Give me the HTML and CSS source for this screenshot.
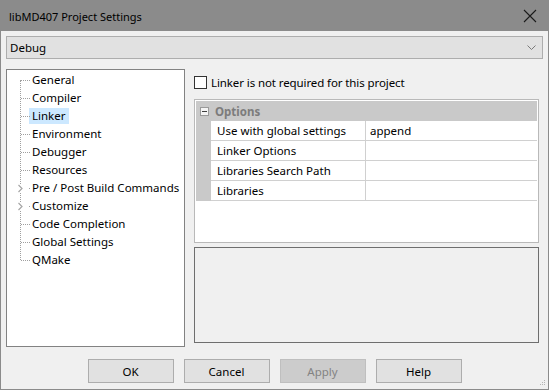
FILE: index.html
```html
<!DOCTYPE html>
<html lang="en">
<head>
    <meta charset="UTF-8">
    <title>libMD407 Project Settings</title>
    <link rel="stylesheet" href="styles.css">
</head>
<body>
    <div class="window">
        <div class="titlebar">
            <span class="title">libMD407 Project Settings</span>
            <svg class="close" width="14" height="14" viewBox="0 0 14 14">
                <path d="M1 1 L13 13 M13 1 L1 13" stroke="#1b1b1b" stroke-width="1.1" fill="none"/>
            </svg>
        </div>
        <div class="frame">
            <div class="combo">
                <span>Debug</span>
                <svg width="9" height="6" viewBox="0 0 9 6">
                    <path d="M0.5 0.5 L4.5 4.5 L8.5 0.5" stroke="#7a7a7a" fill="none"/>
                </svg>
            </div>
            <div class="main">
                <ul class="tree">
                    <li>General</li>
                    <li>Compiler</li>
                    <li><span class="selected">Linker</span></li>
                    <li>Environment</li>
                    <li>Debugger</li>
                    <li>Resources</li>
                    <li class="exp">
                        <svg class="arrow" width="7" height="9" viewBox="0 0 7 9"><path d="M1.5 1 L5 4.5 L1.5 8" stroke="#a6a6a6" stroke-width="1.2" fill="none"/></svg>
                        Pre / Post Build Commands
                    </li>
                    <li class="exp">
                        <svg class="arrow" width="7" height="9" viewBox="0 0 7 9"><path d="M1.5 1 L5 4.5 L1.5 8" stroke="#a6a6a6" stroke-width="1.2" fill="none"/></svg>
                        Customize
                    </li>
                    <li>Code Completion</li>
                    <li>Global Settings</li>
                    <li>QMake</li>
                </ul>
                <div class="side">
                    <label class="check"><span class="box"></span>Linker is not required for this project</label>
                    <div class="grid">
                        <div class="group">
                            <span class="minus"></span>
                            <b>Options</b>
                        </div>
                        <div class="row"><span class="margin"></span><span class="name">Use with global settings</span><span class="value">append</span></div>
                        <div class="row"><span class="margin"></span><span class="name">Linker Options</span><span class="value"></span></div>
                        <div class="row"><span class="margin"></span><span class="name">Libraries Search Path</span><span class="value"></span></div>
                        <div class="row"><span class="margin"></span><span class="name">Libraries</span><span class="value"></span></div>
                    </div>
                    <div class="desc"></div>
                </div>
            </div>
            <div class="buttons">
                <button class="btn">OK</button>
                <button class="btn">Cancel</button>
                <button class="btn disabled">Apply</button>
                <button class="btn">Help</button>
            </div>
            <svg class="grip" width="6" height="6" viewBox="0 0 6 6">
                <rect x="4" y="0" width="1" height="1" fill="#b5b5b5"/>
                <rect x="2" y="2" width="1" height="1" fill="#b5b5b5"/>
                <rect x="4" y="2" width="1" height="1" fill="#b5b5b5"/>
                <rect x="0" y="4" width="1" height="1" fill="#b5b5b5"/>
                <rect x="2" y="4" width="1" height="1" fill="#b5b5b5"/>
                <rect x="4" y="4" width="1" height="1" fill="#b5b5b5"/>
            </svg>
        </div>
    </div>
</body>
</html>
```

FILE: styles.css
```css
body {
    margin: 0;
    font-family: "Noto Sans", sans-serif;
    font-size: 11.5px;
    color: #000;
    background: #f0f0f0;
}
.window {
    width: 549px;
    height: 390px;
}
.titlebar {
    height: 31px;
    background: #8b8b8b;
    display: flex;
    align-items: center;
    justify-content: space-between;
    padding: 2px 12px 0 9px;
    box-sizing: border-box;
    font-size: 11px;
}
.close {
    margin-bottom: 2px;
}
.frame {
    position: relative;
    height: 359px;
    box-sizing: border-box;
    border: 1px solid #8b8b8b;
    border-top: 0;
    padding: 5px 5px 0 5px;
    background: #f0f0f0;
}
.combo {
    height: 23px;
    box-sizing: border-box;
    border: 1px solid #adadad;
    background: #e1e1e1;
    display: flex;
    align-items: center;
    justify-content: space-between;
    padding: 0 6px 0 3px;
}
.main {
    display: flex;
    gap: 9px;
    margin: 10px 4px 0 0;
}
.tree {
    position: relative;
    width: 179px;
    height: 278px;
    box-sizing: border-box;
    border: 1px solid #828282;
    background: #fff;
    margin: 0;
    padding: 1px 0 0 0;
    list-style: none;
}
.tree::before {
    content: "";
    position: absolute;
    left: 13px;
    top: 10px;
    height: 180px;
    border-left: 1px dotted #a0a0a0;
}
.tree li {
    position: relative;
    height: 18px;
    line-height: 18px;
    padding-left: 25px;
    white-space: nowrap;
}
.tree li::before {
    content: "";
    position: absolute;
    left: 14px;
    top: 9px;
    width: 9px;
    border-top: 1px dotted #a0a0a0;
}
.tree li.exp::before {
    left: 22px;
    width: 1px;
}
.tree .arrow {
    position: absolute;
    left: 10px;
    top: 5px;
    background: #fff;
}
.selected {
    display: inline-block;
    background: #cce8ff;
    line-height: 16px;
    padding: 0 4px 0 3px;
    margin-left: -3px;
}
.side {
    flex: 1;
    display: flex;
    flex-direction: column;
}
.check {
    height: 16px;
    margin-top: 5px;
    display: flex;
    align-items: center;
    gap: 4px;
    letter-spacing: -0.1px;
}
.box {
    width: 13px;
    height: 13px;
    box-sizing: border-box;
    border: 1px solid #333;
    background: #fff;
}
.grid {
    margin-top: 9px;
    height: 144px;
    box-sizing: border-box;
    border: 1px solid #b9b9b9;
    padding: 1px;
    background: #fff;
}
.group {
    height: 20px;
    background: #c9c9c9;
    display: flex;
    align-items: center;
}
.group b {
    color: #7c7c7c;
    margin-left: 6px;
}
.minus {
    position: relative;
    width: 9px;
    height: 9px;
    box-sizing: border-box;
    border: 1px solid #9a9a9a;
    background: #f4f4f4;
    margin-left: 4px;
}
.minus::after {
    content: "";
    position: absolute;
    left: 1px;
    top: 3px;
    width: 5px;
    height: 1px;
    background: #404040;
}
.row {
    display: flex;
    height: 20px;
    line-height: 19px;
}
.margin {
    width: 15px;
    background: #c9c9c9;
}
.name {
    width: 155px;
    padding-left: 6px;
    box-sizing: border-box;
    border-right: 1px solid #d0d0d0;
    border-bottom: 1px solid #d0d0d0;
}
.value {
    flex: 1;
    padding-left: 4px;
    border-bottom: 1px solid #d0d0d0;
}
.desc {
    margin-top: 4px;
    height: 96px;
    box-sizing: border-box;
    border: 1px solid #6e6e6e;
    background: #f0f0f0;
}
.buttons {
    display: flex;
    justify-content: center;
    gap: 10px;
    margin-top: 12px;
}
.btn {
    width: 86px;
    height: 24px;
    border: 1px solid #adadad;
    background: #e1e1e1;
    font-family: "Noto Sans", sans-serif;
    font-size: 11.5px;
    color: #000;
    padding: 0;
}
.btn.disabled {
    background: #cccccc;
    border-color: #bfbfbf;
    color: #838383;
}
.grip {
    position: absolute;
    right: 2px;
    bottom: 3px;
}
```
